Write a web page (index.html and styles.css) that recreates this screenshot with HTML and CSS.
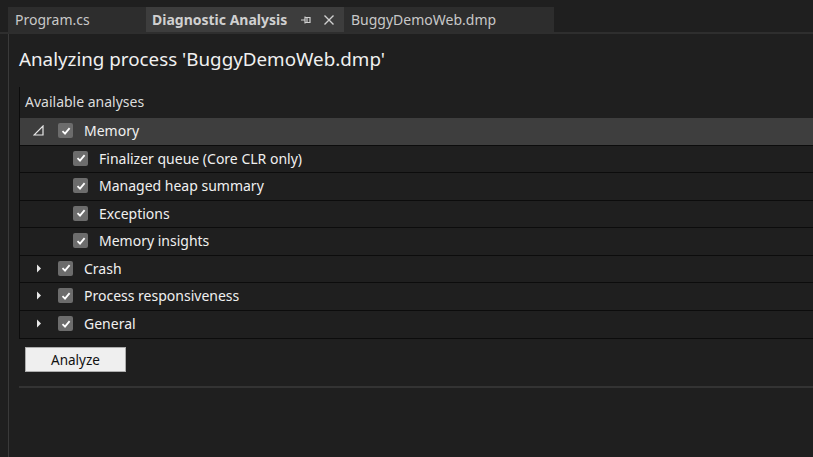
FILE: index.html
```html
<!DOCTYPE html>
<html>
<head>
<meta charset="utf-8">
<link rel="stylesheet" href="styles.css">
</head>
<body>
<div class="tabs">
  <div class="tab">Program.cs</div>
  <div class="tab active">Diagnostic Analysis
    <svg class="pin" width="12" height="10" viewBox="0 0 12 10"><path d="M1 5H5M5 1.5V8.5M5 2.5H10V7.5H5M7 2.5V7.5" fill="none" stroke="#d0d0d0" stroke-width="1.2"/></svg>
    <svg class="close" width="12" height="12" viewBox="0 0 12 12"><path d="M1.5 1.5L10.5 10.5M10.5 1.5L1.5 10.5" stroke="#d0d0d0" stroke-width="1.4"/></svg>
  </div>
  <div class="tab">BuggyDemoWeb.dmp</div>
</div>
<div class="main">
  <h1 class="title">Analyzing process 'BuggyDemoWeb.dmp'</h1>
  <div class="tree">
    <div class="tree-header">Available analyses</div>
    <div class="row selected">
      <span class="exp"><svg width="11" height="11" viewBox="0 0 11 11"><path d="M1 10H10V1Z" fill="none" stroke="#e8e8e8" stroke-width="1.2"/></svg></span>
      <span class="cb"><svg width="10" height="10" viewBox="0 0 10 10"><path d="M1.5 5.2L4 7.6L8.6 2.2" fill="none" stroke="#fff" stroke-width="1.8"/></svg></span>
      <span class="label">Memory</span>
    </div>
    <div class="row child">
      <span class="cb"><svg width="10" height="10" viewBox="0 0 10 10"><path d="M1.5 5.2L4 7.6L8.6 2.2" fill="none" stroke="#fff" stroke-width="1.8"/></svg></span>
      <span class="label">Finalizer queue (Core CLR only)</span>
    </div>
    <div class="row child">
      <span class="cb"><svg width="10" height="10" viewBox="0 0 10 10"><path d="M1.5 5.2L4 7.6L8.6 2.2" fill="none" stroke="#fff" stroke-width="1.8"/></svg></span>
      <span class="label">Managed heap summary</span>
    </div>
    <div class="row child">
      <span class="cb"><svg width="10" height="10" viewBox="0 0 10 10"><path d="M1.5 5.2L4 7.6L8.6 2.2" fill="none" stroke="#fff" stroke-width="1.8"/></svg></span>
      <span class="label">Exceptions</span>
    </div>
    <div class="row child">
      <span class="cb"><svg width="10" height="10" viewBox="0 0 10 10"><path d="M1.5 5.2L4 7.6L8.6 2.2" fill="none" stroke="#fff" stroke-width="1.8"/></svg></span>
      <span class="label">Memory insights</span>
    </div>
    <div class="row">
      <span class="exp"><svg width="11" height="11" viewBox="0 0 11 11"><path d="M4 1.5L8 5.5L4 9.5Z" fill="#e8e8e8"/></svg></span>
      <span class="cb"><svg width="10" height="10" viewBox="0 0 10 10"><path d="M1.5 5.2L4 7.6L8.6 2.2" fill="none" stroke="#fff" stroke-width="1.8"/></svg></span>
      <span class="label">Crash</span>
    </div>
    <div class="row">
      <span class="exp"><svg width="11" height="11" viewBox="0 0 11 11"><path d="M4 1.5L8 5.5L4 9.5Z" fill="#e8e8e8"/></svg></span>
      <span class="cb"><svg width="10" height="10" viewBox="0 0 10 10"><path d="M1.5 5.2L4 7.6L8.6 2.2" fill="none" stroke="#fff" stroke-width="1.8"/></svg></span>
      <span class="label">Process responsiveness</span>
    </div>
    <div class="row">
      <span class="exp"><svg width="11" height="11" viewBox="0 0 11 11"><path d="M4 1.5L8 5.5L4 9.5Z" fill="#e8e8e8"/></svg></span>
      <span class="cb"><svg width="10" height="10" viewBox="0 0 10 10"><path d="M1.5 5.2L4 7.6L8.6 2.2" fill="none" stroke="#fff" stroke-width="1.8"/></svg></span>
      <span class="label">General</span>
    </div>
  </div>
  <button class="analyze">Analyze</button>
  <div class="divider"></div>
</div>
</body>
</html>
```
FILE: styles.css
```css
html, body {
  margin: 0;
  padding: 0;
  background: #1f1f1f;
  height: 100%;
  overflow: hidden;
  font-family: "Noto Sans", "Open Sans", sans-serif;
}
.tabs {
  display: flex;
  padding: 7px 0 0 8px;
  height: 25px;
  border-bottom: 2px solid #2e2e2e;
}
.tab {
  display: flex;
  align-items: center;
  background: #2d2d2d;
  color: #c8c8c8;
  font-size: 14px;
  padding: 0 7px;
  box-sizing: border-box;
  height: 25px;
}
.tab:first-child { width: 138px; }
.tab.active {
  background: #3d3d3d;
  font-weight: bold;
  color: #d0d0d0;
  width: 198px;
  padding-left: 6px;
}
.tab:last-child { width: 210px; }
.pin { margin-left: auto; margin-right: 11px; }
.close { margin-right: 2px; }
.main {
  margin-left: 8px;
  border-left: 1px solid #3a3a3a;
  padding-left: 10px;
  height: 424px;
}
.title {
  margin: 0;
  padding-top: 12px;
  font-size: 18.8px;
  font-weight: normal;
  color: #f0f0f0;
  line-height: 26px;
  height: 41px;
}
.tree {
  border-left: 1px solid #0c0c0c;
  border-bottom: 1px solid #0c0c0c;
}
.tree-header {
  height: 31px;
  box-sizing: border-box;
  padding: 5px 0 0 5px;
  font-size: 14px;
  color: #dcdcdc;
  line-height: 20px;
}
.row {
  display: flex;
  align-items: center;
  height: 27.5px;
  box-sizing: border-box;
  border-bottom: 1px solid #0c0c0c;
  font-size: 14px;
  color: #f0f0f0;
  padding-bottom: 1px;
}
.row:last-child { border-bottom: none; }
.row.selected { background: #3e3e3e; }
.exp {
  width: 11px;
  height: 11px;
  margin-left: 13px;
  display: flex;
}
.cb {
  width: 15px;
  height: 15px;
  border-radius: 2px;
  background: #6c6c6c;
  display: flex;
  align-items: center;
  justify-content: center;
  margin-left: 14px;
}
.row.child .cb { margin-left: 53px; }
.label { margin-left: 11px; }
.analyze {
  display: block;
  margin: 8px 0 0 6px;
  width: 101px;
  height: 25px;
  background: #efefef;
  border: 1px solid #adadad;
  border-radius: 0;
  font-family: "Noto Sans", sans-serif;
  font-size: 13.5px;
  color: #111;
  padding: 0;
}
.divider {
  margin-top: 14px;
  height: 2px;
  background: #333333;
}
```
